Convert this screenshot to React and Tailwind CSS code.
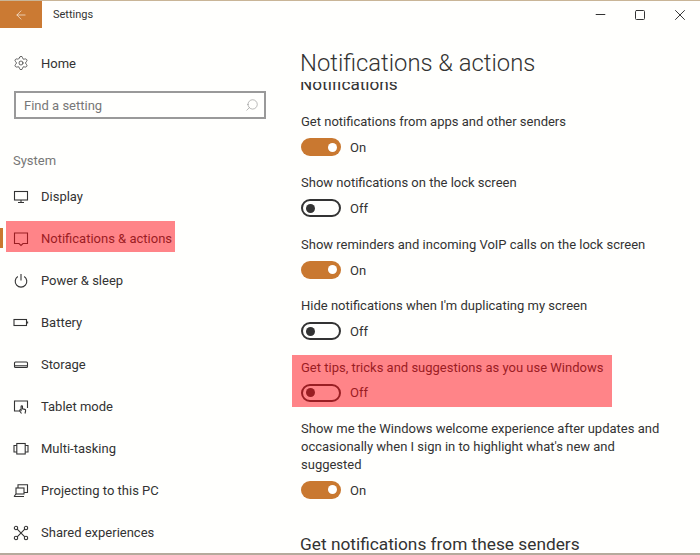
import { ArrowLeft, Minus, Square, X, Search, Settings } from 'lucide-react'

function Ic({ children }) {
  return (
    <svg width="16" height="16" viewBox="0 0 16 16" fill="none" stroke="#333" strokeWidth="1.1">
      {children}
    </svg>
  )
}

const navItems = [
  {
    label: 'Display',
    icon: <Ic><rect x="1.5" y="2.5" width="13" height="8.5" /><path d="M5 13.5h6M8 11v2.5" /></Ic>,
  },
  {
    label: 'Notifications & actions',
    active: true,
    icon: <Ic><path d="M1.5 2h13v10.5h-4.5l-2 2-2-2H1.5z" /></Ic>,
  },
  {
    label: 'Power & sleep',
    icon: <Ic><path d="M8 1v6.5" /><path d="M4.8 3.5a5.8 5.8 0 1 0 6.4 0" /></Ic>,
  },
  {
    label: 'Battery',
    icon: <Ic><rect x="1" y="4.5" width="12.5" height="6" /><path d="M14.6 6.5v2" /></Ic>,
  },
  {
    label: 'Storage',
    icon: <Ic><rect x="1.5" y="5" width="13" height="5.5" rx="1" /><path d="M2 8.8h12" /></Ic>,
  },
  {
    label: 'Tablet mode',
    icon: <Ic><path d="M7 12H1.5V2h13v7" /><path d="M8.5 14.5c-1-1.2-1.8-2.3-1.8-3.2 0-.6.9-.8 1.4-.2V7.6c0-1 1.4-1 1.4 0v2.2l2.4.6c.7.2.9.8.7 1.6l-.6 2.5" /></Ic>,
  },
  {
    label: 'Multi-tasking',
    icon: <Ic><rect x="3.8" y="2.5" width="8.4" height="10.5" /><path d="M3.8 4.5H1v6.5h2.8M12.2 4.5H15v6.5h-2.8" /></Ic>,
  },
  {
    label: 'Projecting to this PC',
    icon: <Ic><path d="M5 5V1.8h9.5v7.7H11" /><rect x="3" y="5" width="8" height="6" /><path d="M1 13.5h10M3 11l-2 2.5" /></Ic>,
  },
  {
    label: 'Shared experiences',
    icon: <Ic><circle cx="3" cy="3" r="1.7" /><circle cx="13" cy="3" r="1.7" /><circle cx="3" cy="13" r="1.7" /><circle cx="13" cy="13" r="1.7" /><path d="M4.2 4.2l7.6 7.6M11.8 4.2l-7.6 7.6" /></Ic>,
  },
]

const settingsRows = [
  { label: 'Get notifications from apps and other senders', on: true },
  { label: 'Show notifications on the lock screen', on: false },
  { label: 'Show reminders and incoming VoIP calls on the lock screen', on: true },
  { label: "Hide notifications when I'm duplicating my screen", on: false },
  { label: 'Get tips, tricks and suggestions as you use Windows', on: false },
  {
    label: "Show me the Windows welcome experience after updates and occasionally when I sign in to highlight what's new and suggested",
    on: true,
  },
]

function Toggle({ on }) {
  return (
    <div className="flex items-center h-[18px] mt-[7px]">
      {on ? (
        <div className="w-[40px] h-[18px] rounded-full bg-[#c97830] flex items-center justify-end pr-[4px]">
          <div className="w-[9px] h-[9px] rounded-full bg-white" />
        </div>
      ) : (
        <div className="w-[40px] h-[18px] rounded-full border-2 border-[#333] flex items-center pl-[3px]">
          <div className="w-[9px] h-[9px] rounded-full bg-[#333]" />
        </div>
      )}
      <span className="ml-[9px] pt-px text-[13px]">{on ? 'On' : 'Off'}</span>
    </div>
  )
}

export default function App() {
  return (
    <div className="relative w-[700px] h-[555px] overflow-hidden bg-[#fffffd] font-['Roboto',sans-serif] text-[#333]">
      <div className="h-[1px] bg-[#c9b597]" />

      {/* Title bar */}
      <div className="flex items-center h-[27px]">
        <div className="w-[42px] h-[27px] bg-[#cb7a33] flex items-center justify-center">
          <ArrowLeft size={14} color="#f6e6d6" strokeWidth={1.3} />
        </div>
        <span className="ml-[11px] pt-px text-[11px]">Settings</span>
        <div className="ml-auto flex items-center text-[#333]">
          <div className="w-[40px] flex justify-center"><Minus size={15} strokeWidth={1.6} /></div>
          <div className="w-[40px] flex justify-center"><Square size={12} strokeWidth={2} /></div>
          <div className="w-[40px] flex justify-center"><X size={18} strokeWidth={1.3} /></div>
        </div>
      </div>

      <div className="flex h-[527px] overflow-hidden">
        {/* Sidebar */}
        <div className="w-[280px] shrink-0 flex flex-col">
          <div className="flex items-center h-[42px] mt-[14px] pl-[13px]">
            <Settings size={16} strokeWidth={1.1} />
            <span className="ml-[12px] pt-px text-[13px]">Home</span>
          </div>
          <div className="mx-[14px] w-[252px] h-[28px] mt-[7px] border-2 border-[#999] flex items-center justify-between pl-[8px] pr-[5px] text-[13px] text-[#777]">
            <span className="pt-px">Find a setting</span>
            <Search size={14} strokeWidth={1} color="#888" className="-scale-x-100" />
          </div>
          <div className="mt-[30px] ml-[13px] h-[24px] flex items-center text-[13px] text-[#777]">System</div>
          <div className="mt-[3px] flex flex-col">
            {navItems.map(item => (
              <div key={item.label} className="relative flex items-center h-[42px] pl-[13px]">
                {item.active && <div className="absolute left-0 top-[10px] w-[3px] h-[20px] bg-[#c97830]" />}
                {item.icon}
                <span className="ml-[12px] text-[13px]">{item.label}</span>
              </div>
            ))}
          </div>
        </div>

        {/* Content */}
        <div className="flex-1 min-w-0 pl-[20px] flex flex-col">
          <h1 className="text-[23.8px] font-light leading-[32px] mt-[19px] h-[32px] shrink-0">Notifications &amp; actions</h1>
          <div className="h-[10px] overflow-hidden mt-[3px] shrink-0">
            <div className="text-[17.2px] leading-[24px] -mt-[10px]">Notifications</div>
          </div>
          <div className="flex flex-col pl-[1px] mt-[21px] gap-[18.4px] shrink-0">
            {settingsRows.map(row => (
              <div key={row.label}>
                <div className="text-[13px] leading-[18px] w-[375px]">{row.label}</div>
                <Toggle on={row.on} />
              </div>
            ))}
          </div>
          <div className="text-[17.3px] leading-[24px] mt-[33px] shrink-0">Get notifications from these senders</div>
        </div>
      </div>

      {/* Red highlight marks */}
      <div className="absolute left-[6px] top-[221px] w-[169px] h-[31px] bg-[#ff0a14]/50" />
      <div className="absolute left-[292px] top-[355px] w-[320px] h-[52px] bg-[#ff0a14]/50" />

      <div className="absolute left-0 right-0 bottom-0 h-[2px] bg-[#b5aa9c]" />
    </div>
  )
}
